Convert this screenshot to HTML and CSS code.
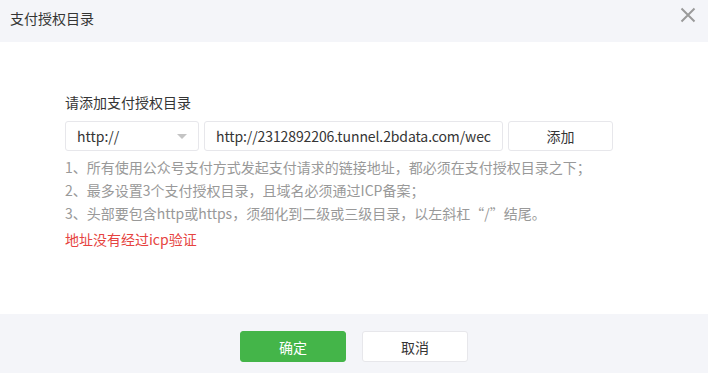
FILE: index.html
```html
<!DOCTYPE html>
<html lang="zh-CN">
<head>
  <meta charset="UTF-8" />
  <title>支付授权目录</title>
  <link rel="stylesheet" href="styles.css">
</head>
<body>
  <div class="dialog">
    <div class="dialog-hd">
      <h3 class="dialog-title">支付授权目录</h3>
      <a class="dialog-close" href="#">
        <svg width="16" height="16" viewBox="0 0 16 16"><path d="M1.5 1.5 L14.5 14.5 M14.5 1.5 L1.5 14.5" stroke="#9a9a9a" stroke-width="2" fill="none"/></svg>
      </a>
    </div>

    <div class="dialog-bd">
      <p class="field-label">请添加支付授权目录</p>
      <div class="field-row">
        <div class="select">
          <span>http://</span>
          <i class="select-arrow"></i>
        </div>
        <input class="url-input" type="text" value="http://2312892206.tunnel.2bdata.com/wechat/pay/" />
        <button class="btn btn-default btn-add">添加</button>
      </div>
      <ul class="tips">
        <li>1、所有使用公众号支付方式发起支付请求的链接地址，都必须在支付授权目录之下；</li>
        <li>2、最多设置3个支付授权目录，且域名必须通过ICP备案；</li>
        <li>3、头部要包含http或https，须细化到二级或三级目录，以左斜杠“/”结尾。</li>
      </ul>
      <p class="error-tip">地址没有经过icp验证</p>
    </div>

    <div class="dialog-ft">
      <button class="btn btn-primary">确定</button>
      <button class="btn btn-default">取消</button>
    </div>
  </div>
</body>
</html>
```

FILE: styles.css
```css
body {
  margin: 0;
  font-family: "Noto Sans CJK SC", sans-serif;
  font-size: 14px;
  color: #353535;
  background: #fff;
}

.dialog { width: 708px; height: 373px; display: flex; flex-direction: column; }

.dialog-hd {
  height: 42px;
  box-sizing: border-box;
  padding: 7px 12px 0 10px;
  background: #f4f5f9;
  display: flex;
  align-items: flex-start;
}
.dialog-title { margin: 0; font-size: 14px; font-weight: normal; line-height: 22px; flex: 1; }
.dialog-close { display: block; width: 16px; height: 16px; }
.dialog-close svg { display: block; }

.dialog-bd { flex: 1; padding: 50px 65px 0; }

.field-label { margin: 0 0 9px; line-height: 20px; }

.field-row { display: flex; gap: 5px; height: 30px; }

.select {
  width: 134px;
  box-sizing: border-box;
  border: 1px solid #e7e7eb;
  border-radius: 3px;
  padding: 0 10px 0 11px;
  display: flex;
  align-items: center;
  justify-content: space-between;
}
.select-arrow {
  width: 0; height: 0;
  border-left: 5px solid transparent;
  border-right: 5px solid transparent;
  border-top: 5px solid #c4c4c4;
  margin-right: 1px;
}

.url-input {
  width: 299px;
  box-sizing: border-box;
  border: 1px solid #e7e7eb;
  border-radius: 3px;
  padding: 0 11px;
  font-family: inherit;
  font-size: 14px;
  letter-spacing: -0.1px;
  color: #353535;
  outline: none;
}

.btn {
  box-sizing: border-box;
  border-radius: 3px;
  font-family: inherit;
  font-size: 14px;
  cursor: pointer;
  padding: 0;
}
.btn-default { background: #fff; border: 1px solid #e7e7eb; color: #353535; }
.btn-primary { background: #44b549; border: 1px solid #44b549; color: #fff; }
.btn-add { width: 105px; height: 30px; }

.tips { list-style: none; margin: 5px 0 0; padding: 0; color: #999; line-height: 23px; }

.error-tip { margin: 3px 0 0; color: #e64340; line-height: 23px; }

.dialog-ft {
  height: 59px;
  box-sizing: border-box;
  padding-top: 17px;
  background: #f4f5f9;
  display: flex;
  justify-content: center;
  gap: 16px;
}
.dialog-ft .btn { width: 106px; height: 31px; }
```
